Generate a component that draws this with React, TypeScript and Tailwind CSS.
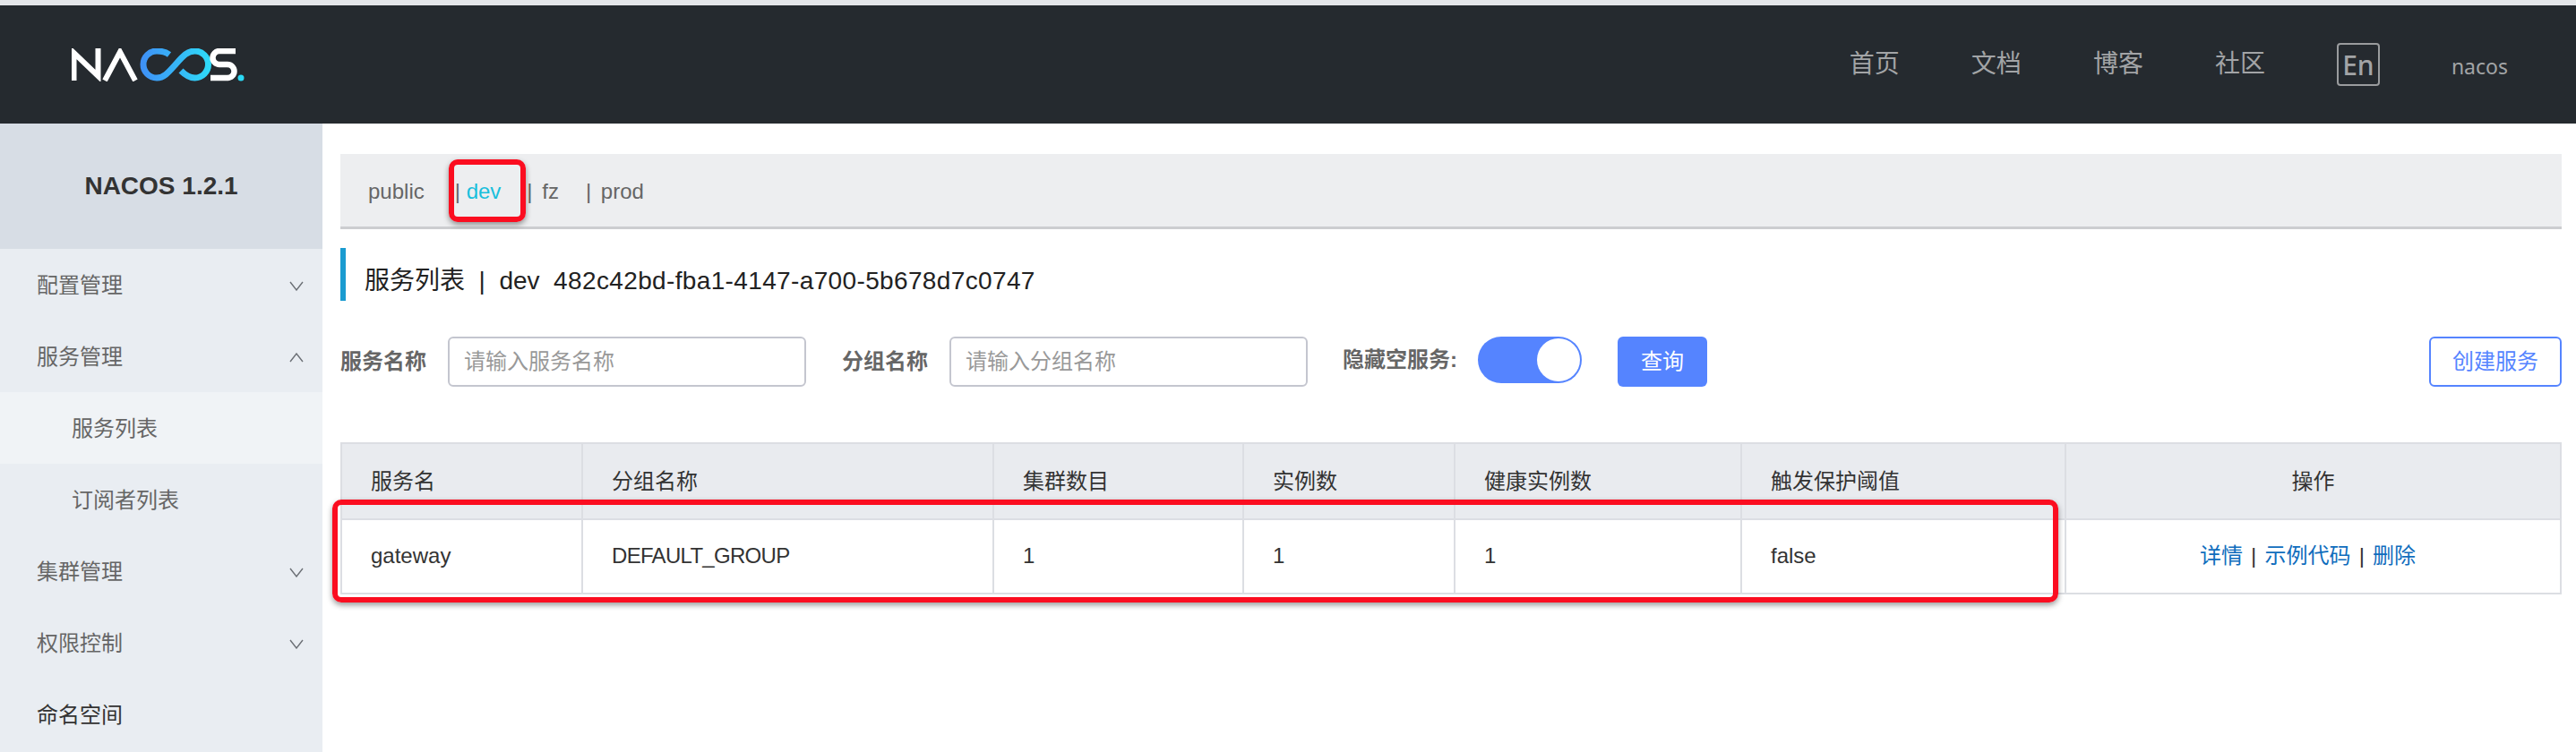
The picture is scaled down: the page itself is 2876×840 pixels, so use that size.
import React from "react";

const menuTop = "flex h-20 items-center justify-between pl-[41px] pr-[21px] pt-[2px] text-[24px] text-[#666]";

const Chevron = ({ up = false }: { up?: boolean }) => (
  <svg width="16" height="11" viewBox="0 0 16 11" fill="none" stroke="#6b6f75" strokeWidth="1.4">
    <path d={up ? "M1 10 L8 1 L15 10" : "M1 1 L8 10 L15 1"} />
  </svg>
);

const Logo = () => (
  <svg width="194" height="37" viewBox="0 0 194 37" fill="none">
    <defs>
      <linearGradient id="inf" x1="76" y1="0" x2="156" y2="0" gradientUnits="userSpaceOnUse">
        <stop offset="0" stopColor="#3f8ef6" />
        <stop offset="1" stopColor="#2edcf8" />
      </linearGradient>
    </defs>
    <path d="M2.5 36 V5 L29.5 31 V0" stroke="#fff" strokeWidth="6" />
    <path d="M37 36 L54 4 L71 36" stroke="#fff" strokeWidth="6" />
    <path
      d="M109 7 C105 4 100 3 95 3 A15 15 0 0 0 95 33 C103 33 108 27 116 18 C124 9 129 3 137.5 3 A15 15 0 0 1 137.5 33 C131 33 127 30 122 25"
      stroke="url(#inf)"
      strokeWidth="7"
    />
    <path d="M183 3 H165 A7.5 7.5 0 0 0 165 18 H174 A7.5 7.5 0 0 1 174 33 H155" stroke="#fff" strokeWidth="6.5" />
    <circle cx="189" cy="33" r="3.5" fill="#2bd9f5" />
  </svg>
);

const columns = [
  { title: "服务名", value: "gateway", width: "w-[269px]", cell: "" },
  { title: "分组名称", value: "DEFAULT_GROUP", width: "w-[459px]", cell: "tracking-[-0.7px]" },
  { title: "集群数目", value: "1", width: "w-[279px]", cell: "" },
  { title: "实例数", value: "1", width: "w-[236px]", cell: "" },
  { title: "健康实例数", value: "1", width: "w-[320px]", cell: "" },
  { title: "触发保护阈值", value: "false", width: "w-[362px]", cell: "" },
];

export default function App() {
  return (
    <div className="relative flex h-[840px] w-[2876px] flex-col overflow-hidden bg-white font-['Liberation_Sans','Noto_Sans_CJK_SC',sans-serif]">
      <div className="h-[6px] bg-[#e4e6e9]" />
      {/* header */}
      <div className="flex h-[132px] items-center justify-between bg-[#252a2f] pl-[80px] pr-[76px]">
        <Logo />
        <div className="flex items-center text-[28px] text-[#a2a4a6]">
          <a className="mr-[80px]">首页</a>
          <a className="mr-[80px]">文档</a>
          <a className="mr-[80px]">博客</a>
          <a className="mr-[80px]">社区</a>
          <span className="flex h-12 w-12 items-center justify-center rounded border-2 border-[#9a9c9e] font-['Noto_Sans'] text-[30px] font-medium">
            En
          </span>
          <span className="ml-[80px] mt-1 font-['Noto_Sans'] text-[23px]">nacos</span>
        </div>
      </div>

      <div className="flex flex-1">
        {/* sidebar */}
        <div className="w-[360px] shrink-0 bg-[#e9edf2]">
          <div className="flex h-[140px] items-center justify-center bg-[#d7dde5] text-[28px] font-bold text-[#333]">
            NACOS 1.2.1
          </div>
          <div className={menuTop}>
            配置管理
            <Chevron />
          </div>
          <div className={menuTop}>
            服务管理
            <Chevron up />
          </div>
          <div className="flex h-20 items-center bg-[#f0f3f6] pl-[80px] pt-[2px] text-[24px] text-[#666]">服务列表</div>
          <div className="flex h-20 items-center pl-[80px] pt-[2px] text-[24px] text-[#666]">订阅者列表</div>
          <div className={menuTop}>
            集群管理
            <Chevron />
          </div>
          <div className={menuTop}>
            权限控制
            <Chevron />
          </div>
          <div className="flex h-20 items-center pl-[41px] pt-[2px] text-[24px] text-[#333]">命名空间</div>
        </div>

        {/* content */}
        <div className="flex-1 pl-[20px] pr-[16px] pt-[34px]">
          <div className="flex h-[84px] items-center border-b-[3px] border-[#cccdd0] bg-[#edeef0] pl-[31px] pt-[3px] text-[24px] text-[#666]">
            <span>public</span>
            <span className="ml-[34px]">
              | <span className="text-[#18bfdc]">dev</span>
            </span>
            <span className="ml-[29px]">
              | <span className="ml-[4px]">fz</span>
            </span>
            <span className="ml-[30px]">
              | <span className="ml-[4px]">prod</span>
            </span>
          </div>

          <div className="mt-[21px] flex h-[59px] items-end border-l-[6px] border-[#1a9bd0] pb-[1px] pl-[21px] text-[28px] text-[#222]">
            <span>
              服务列表&nbsp;&nbsp;|&nbsp;&nbsp;dev&nbsp;&nbsp;
              <span className="tracking-[0.36px]">482c42bd-fba1-4147-a700-5b678d7c0747</span>
            </span>
          </div>

          <div className="mt-[40px] flex items-start text-[24px]">
            <label className="mr-[24px] flex h-14 items-center font-bold text-[#666]">服务名称</label>
            <input
              className="h-14 w-[400px] rounded-md border-2 border-[#c4c6cf] px-[16px] text-[24px] placeholder:text-[#999]"
              placeholder="请输入服务名称"
            />
            <label className="ml-[40px] mr-[24px] flex h-14 items-center font-bold text-[#666]">分组名称</label>
            <input
              className="h-14 w-[400px] rounded-md border-2 border-[#c4c6cf] px-[16px] text-[24px] placeholder:text-[#999]"
              placeholder="请输入分组名称"
            />
            <label className="ml-[39px] mr-[23px] flex h-[52px] items-center font-bold text-[#666]">隐藏空服务:</label>
            <div className="flex h-[52px] w-[116px] items-center justify-end rounded-full bg-[#5584ff] pr-[2px]">
              <div className="h-12 w-12 rounded-full bg-white" />
            </div>
            <button className="ml-[40px] h-14 w-[100px] rounded-md bg-[#5584ff] text-white">查询</button>
            <button className="ml-auto h-14 w-[148px] rounded-md border-2 border-[#5584ff] text-[#5584ff]">创建服务</button>
          </div>

          <table className="mt-[62px] w-full table-fixed border-collapse text-[24px] text-[#333]">
            <thead>
              <tr className="h-[85px] bg-[#e9ebef]">
                {columns.map((col) => (
                  <th key={col.title} className={`${col.width} border-2 border-[#dcdee3] pl-[32px] text-left font-normal`}>
                    {col.title}
                  </th>
                ))}
                <th className="border-2 border-[#dcdee3] text-center font-normal">操作</th>
              </tr>
            </thead>
            <tbody>
              <tr className="h-[83px]">
                {columns.map((col) => (
                  <td key={col.title} className={`${col.cell} border-2 border-[#dcdee3] pb-[2px] pl-[32px]`}>
                    {col.value}
                  </td>
                ))}
                <td className="border-2 border-[#dcdee3] pb-[2px] pr-[12px] text-center">
                  <a className="text-[#0f6dbd]">详情</a>
                  <span className="mx-[2.5px]"> | </span>
                  <a className="text-[#0f6dbd]">示例代码</a>
                  <span className="mx-[2.5px]"> | </span>
                  <a className="text-[#0f6dbd]">删除</a>
                </td>
              </tr>
            </tbody>
          </table>
        </div>
      </div>

      {/* red annotation boxes */}
      <div className="absolute left-[501px] top-[178px] h-[70px] w-[86px] rounded-[10px] border-[6px] border-[#fb0d20] shadow-[0_3px_6px_rgba(0,0,0,0.4)]" />
      <div className="absolute left-[371px] top-[558px] h-[115px] w-[1927px] rounded-[10px] border-[6px] border-[#fb0d20] shadow-[0_3px_6px_rgba(0,0,0,0.4)]" />
    </div>
  );
}
